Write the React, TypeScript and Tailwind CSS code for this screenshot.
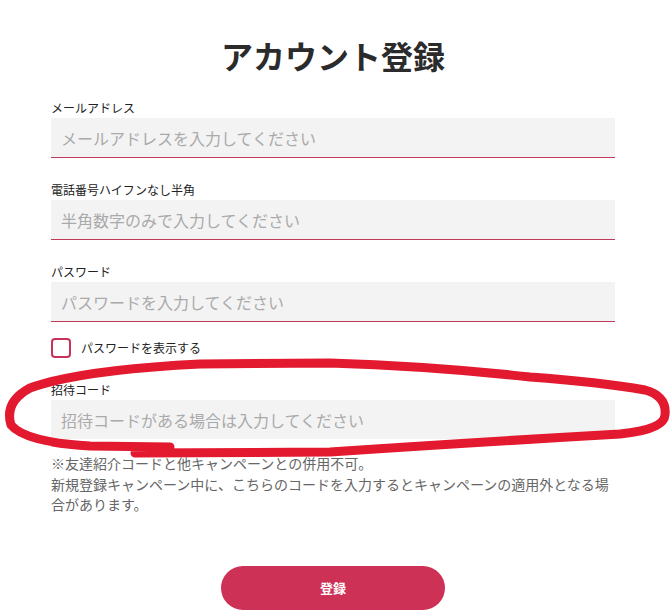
export default function App() {
  const fields = [
    { label: 'メールアドレス', placeholder: 'メールアドレスを入力してください' },
    { label: '電話番号ハイフンなし半角', placeholder: '半角数字のみで入力してください' },
    { label: 'パスワード', placeholder: 'パスワードを入力してください' },
  ]

  return (
    <div
      className="relative min-h-[614px] bg-white pt-[31px]"
      style={{ fontFamily: '"Noto Sans CJK JP", "Noto Sans", sans-serif' }}
    >
      <div className="ml-[51px] w-[564px]">
        <h1 className="mb-[20px] text-center text-[32px] font-bold leading-[48px] text-[#2b2b2b]">
          アカウント登録
        </h1>

        {fields.map((field) => (
          <div key={field.label} className="mb-[23px]">
            <label className="mb-px block text-[12px] leading-[18px] text-[#222]">
              {field.label}
            </label>
            <input
              type="text"
              placeholder={field.placeholder}
              className="block h-[40px] w-full border-b border-[#c23a5b] bg-[#f3f3f3] px-[10px] text-[16px] text-[#333] outline-none placeholder:text-[#aaa]"
            />
          </div>
        ))}

        <label className="-mt-[7px] flex items-center gap-[10px]">
          <span className="block h-[20px] w-[20px] rounded-[4px] border-2 border-[#c8325a] bg-white" />
          <span className="text-[12px] leading-[18px] text-[#222]">
            パスワードを表示する
          </span>
        </label>

        <div className="mt-[23px]">
          <label className="mb-px block text-[12px] leading-[18px] text-[#222]">
            招待コード
          </label>
          <input
            type="text"
            placeholder="招待コードがある場合は入力してください"
            className="block h-[39px] w-full bg-[#f3f3f3] px-[10px] text-[16px] text-[#333] outline-none placeholder:text-[#aaa]"
          />
        </div>

        <p className="mt-[14px] text-[14px] leading-[20.5px] text-[#666]">
          ※友達紹介コードと他キャンペーンとの併用不可。
          <br />
          新規登録キャンペーン中に、こちらのコードを入力するとキャンペーンの適用外となる場合があります。
        </p>

        <div className="mt-[51px] flex justify-center">
          <button
            type="button"
            className="h-[44px] w-[224px] rounded-full bg-[#cd3256] text-[13px] font-bold text-white"
          >
            登録
          </button>
        </div>
      </div>

      {/* hand-drawn highlight */}
      <svg
        className="pointer-events-none absolute left-0 top-0"
        width="671"
        height="614"
        viewBox="0 0 671 614"
      >
        <path
          d="M 135 453 L 330 452 Q 480 442 620 434 Q 664 430 665 415 Q 667 396 645 390 Q 600 382 530 377 Q 430 366 330 363 L 200 364 Q 80 370 30 388 Q 4 402 11 425 Q 25 442 90 446 L 170 447"
          fill="none"
          stroke="#e3192f"
          strokeWidth="9"
          strokeLinecap="round"
          strokeLinejoin="round"
        />
      </svg>
    </div>
  )
}
